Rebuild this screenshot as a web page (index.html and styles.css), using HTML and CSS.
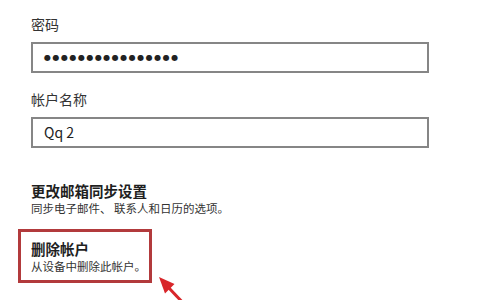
FILE: index.html
```html
<!DOCTYPE html>
<html lang="zh-CN">
<head>
  <meta charset="UTF-8" />
  <title>帐户设置</title>
  <link rel="stylesheet" href="styles.css">
</head>
<body>

<div class="page">
  <div class="field">
    <label class="field-label">密码</label>
    <div class="input-box password">&#9679;&#9679;&#9679;&#9679;&#9679;&#9679;&#9679;&#9679;&#9679;&#9679;&#9679;&#9679;&#9679;&#9679;&#9679;&#9679;</div>
  </div>

  <div class="field">
    <label class="field-label">帐户名称</label>
    <div class="input-box">Qq 2</div>
  </div>

  <div class="link-item sync">
    <div class="link-title">更改邮箱同步设置</div>
    <div class="link-desc">同步电子邮件、 联系人和日历的选项。</div>
  </div>

  <div class="link-item remove">
    <div class="link-title">删除帐户</div>
    <div class="link-desc">从设备中删除此帐户。</div>
  </div>
</div>

<!-- annotation arrow -->
<svg class="arrow" width="30" height="25" viewBox="0 0 30 25">
  <path d="M12 12 L30 31" stroke="#d8262a" stroke-width="3" fill="none"/>
  <polygon points="3,2 18.5,9 9,18.5" fill="#d8262a"/>
</svg>

</body>
</html>
```

FILE: styles.css
```css
body {
  margin: 0;
  font-family: "Noto Sans CJK SC", "Noto Sans", sans-serif;
  background-color: #fff;
  color: #1f1f1f;
  position: relative;
  height: 300px;
  overflow: hidden;
}
.page {
  padding: 15px 0 0 31px;
  width: 398px;
}
.field {
  margin-bottom: 17px;
}
.field-label {
  display: block;
  font-size: 14px;
  line-height: 18px;
  color: #333;
  margin-bottom: 9px;
}
.input-box {
  height: 27px;
  border: 2px solid #868686;
  padding: 0 11px;
  font-size: 14px;
  line-height: 27px;
  color: #222;
}
.password {
  font-family: "DejaVu Sans", sans-serif;
  font-size: 8px;
  letter-spacing: 1.5px;
}
.sync {
  margin-top: 34px;
}
.link-title {
  font-size: 14.5px;
  font-weight: bold;
  line-height: 18px;
}
.link-desc {
  font-size: 11.5px;
  line-height: 17px;
  color: #333;
}
.remove {
  margin: 12px 0 0 -13px;
  width: 118px;
  border: 3px solid #b23a3c;
  padding: 7px 0 5px 10px;
}
.remove .link-title {
  line-height: 19px;
}
.arrow {
  position: absolute;
  left: 156px;
  top: 275px;
}
```
